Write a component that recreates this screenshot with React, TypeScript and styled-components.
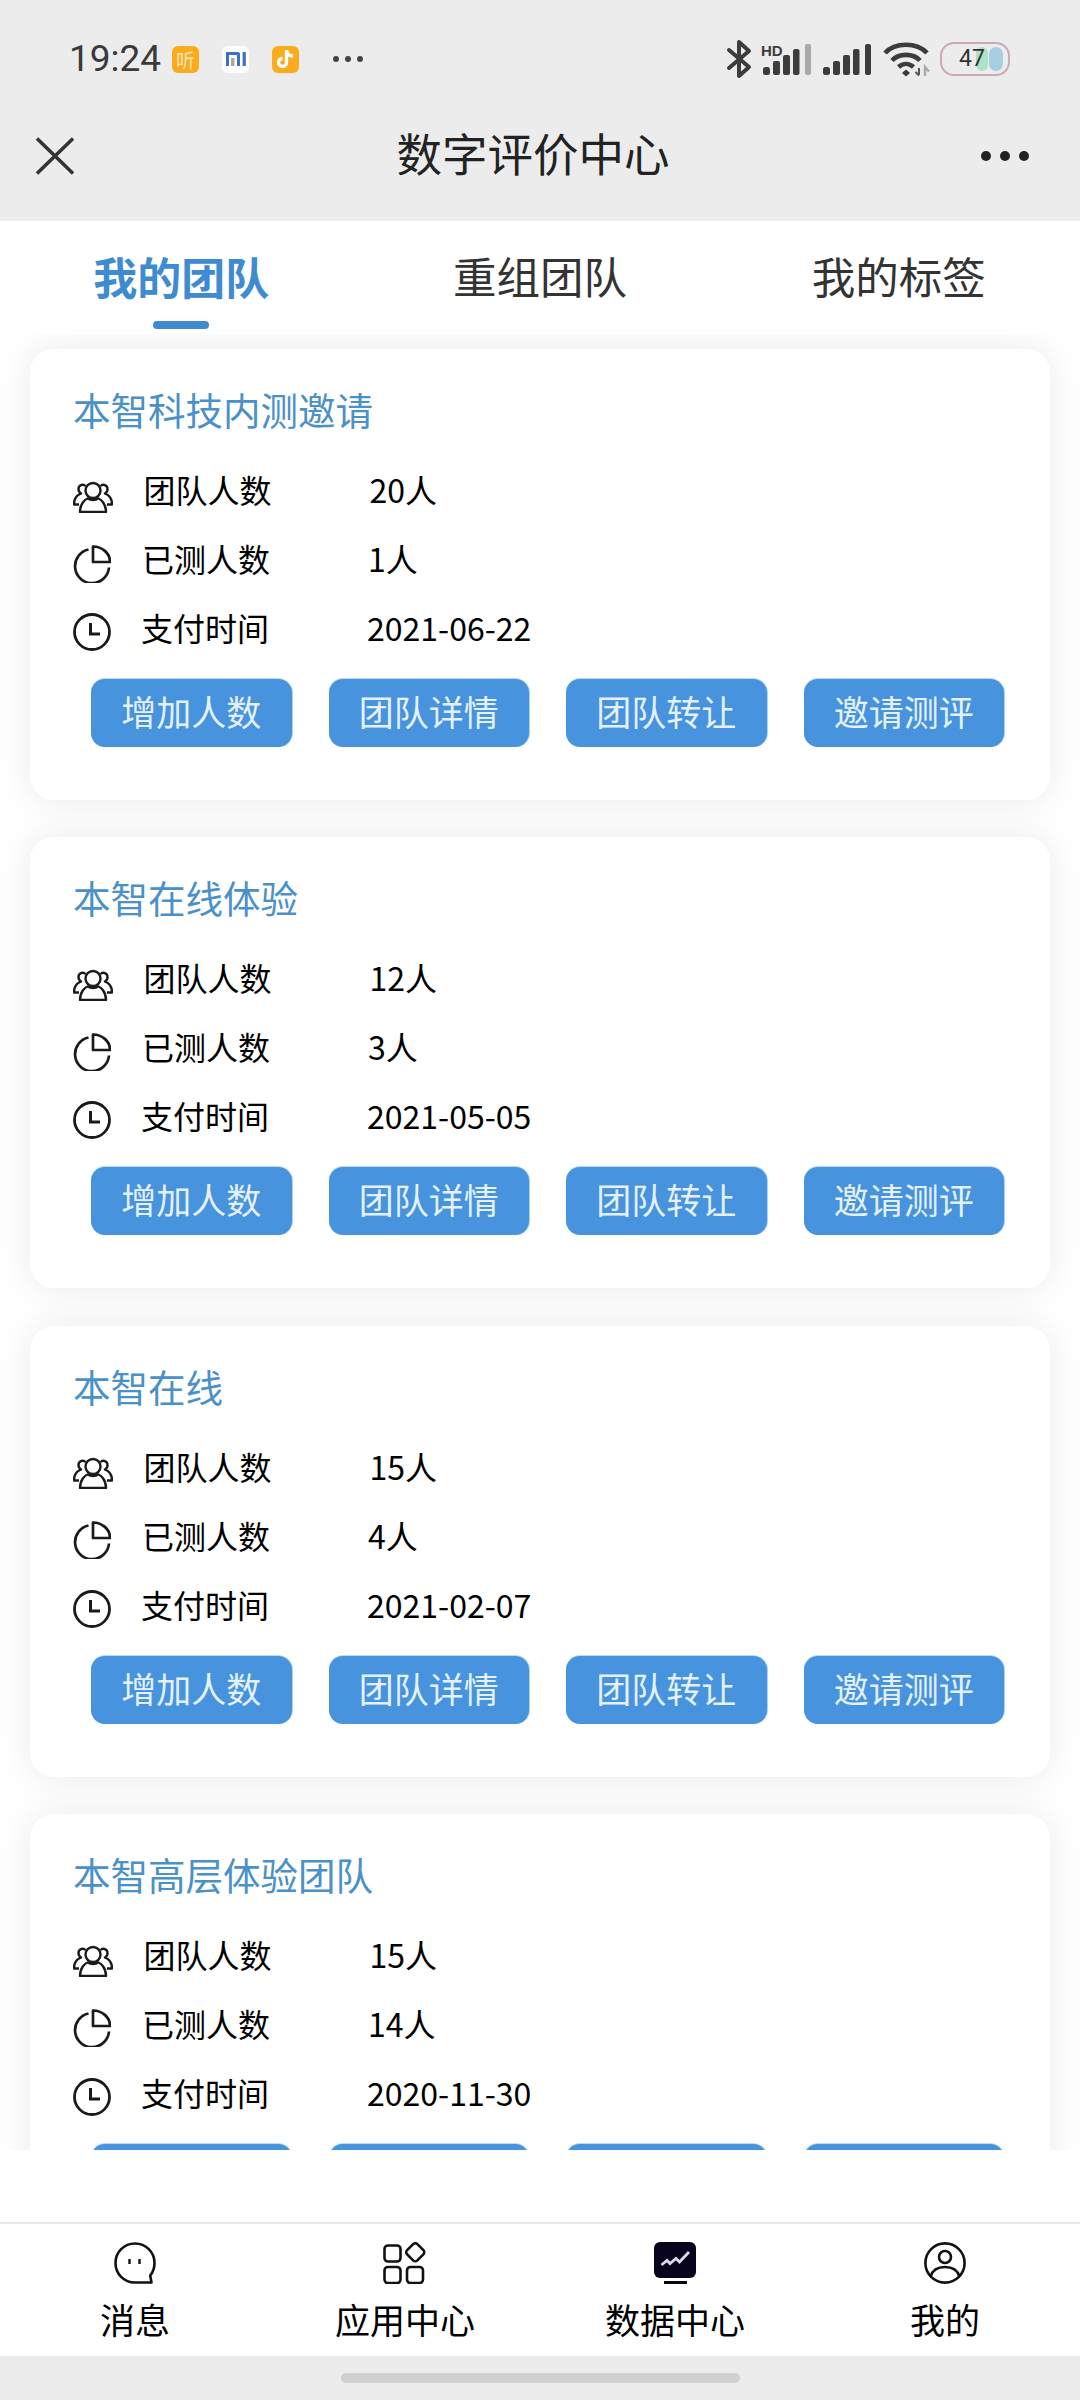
import React from "react";
import styled, { createGlobalStyle } from "styled-components";

const Global = createGlobalStyle`
  html, body { margin: 0; padding: 0; background: #fff; }
  * { box-sizing: border-box; }
`;

const CJK = `"Noto Sans CJK SC", "Noto Sans", sans-serif`;

const Page = styled.div`
  width: 1080px;
  height: 2400px;
  display: flex;
  flex-direction: column;
  overflow: hidden;
  background: #fff;
  font-family: ${CJK};
`;

const Header = styled.header`
  background: #ececec;
  height: 221px;
  flex: none;
  display: flex;
  flex-direction: column;
`;

const StatusBar = styled.div`
  height: 118px;
  display: flex;
  align-items: center;
  justify-content: space-between;
  padding: 0 70px 0 69px;
`;

const StatusLeft = styled.div`
  display: flex;
  align-items: center;
`;

const StatusRight = styled.div`
  display: flex;
  align-items: center;
`;

const Clock = styled.span`
  font-family: Roboto, sans-serif;
  font-size: 37px;
  line-height: 44px;
  color: #3a3a3a;
  width: 103px;
`;

const AppBadge = styled.span<{ $bg: string; $gap: number }>`
  width: 27px;
  height: 27px;
  border-radius: 6px;
  background: ${(p) => p.$bg};
  margin-right: ${(p) => p.$gap}px;
  display: flex;
  align-items: center;
  justify-content: center;
  color: #ffe6bb;
  font-size: 19px;
  line-height: 27px;
  font-family: ${CJK};
`;

const StatusDots = styled.span`
  display: flex;
  gap: 6px;
  margin-left: 11px;
`;

const StatusDot = styled.i`
  width: 6px;
  height: 6px;
  border-radius: 50%;
  background: #444;
`;

const SignalGroup = styled.span`
  position: relative;
  display: flex;
  margin-left: 11px;
`;

const HdTag = styled.span`
  position: absolute;
  left: -2px;
  top: 1px;
  font-family: "Liberation Sans", sans-serif;
  font-weight: 700;
  font-size: 15px;
  line-height: 14px;
  color: #3c3c3c;
`;

const Battery = styled.span`
  position: relative;
  width: 70px;
  height: 34px;
  margin-left: 10px;
  border: 2px solid #cba9bb;
  border-radius: 14px;
  display: flex;
  align-items: center;
  padding-left: 17px;
`;

const BatteryCell = styled.i<{ $left: number; $color: string; $w: number }>`
  position: absolute;
  top: 3px;
  bottom: 3px;
  left: ${(p) => p.$left}px;
  width: ${(p) => p.$w}px;
  border-radius: 7px;
  background: ${(p) => p.$color};
`;

const BatteryText = styled.span`
  position: relative;
  font-family: Roboto, sans-serif;
  font-size: 23px;
  line-height: 28px;
  color: #333;
`;

const NavBar = styled.div`
  height: 76px;
  display: grid;
  grid-template-columns: 1fr auto 1fr;
  align-items: center;
  padding: 0 51px 0 36px;
`;

const NavTitle = styled.h1`
  margin: 0;
  padding: 0 0 8px 1px;
  font-size: 45.5px;
  line-height: 60px;
  font-weight: 400;
  color: #222;
`;

const MoreDots = styled.div`
  justify-self: end;
  display: flex;
  gap: 9px;
`;

const MoreDot = styled.i`
  width: 10px;
  height: 10px;
  border-radius: 50%;
  background: #222;
`;

const Tabs = styled.nav`
  height: 113px;
  flex: none;
  display: flex;
  padding: 0 2px;
  background: #fff;
  position: relative;
  z-index: 2;
`;

const Tab = styled.div<{ $active?: boolean }>`
  flex: 1;
  display: flex;
  flex-direction: column;
  align-items: center;
  padding-top: 25px;
  font-size: ${(p) => (p.$active ? 44 : 43.5)}px;
  line-height: 60px;
  font-weight: ${(p) => (p.$active ? 700 : 400)};
  color: ${(p) => (p.$active ? "#3f8bd2" : "#333")};
`;

const TabMark = styled.i<{ $active?: boolean }>`
  width: 56px;
  height: 8px;
  margin-top: 15px;
  border-radius: 4px;
  background: ${(p) => (p.$active ? "#3f8bd2" : "transparent")};
`;

const List = styled.main`
  height: 1816px;
  flex: none;
  overflow: hidden;
  padding: 15px 30px 0;
  display: flex;
  flex-direction: column;
  gap: 37.25px;
`;

const Card = styled.section`
  flex: none;
  height: 451px;
  background: #fff;
  border-radius: 24px;
  padding: 37px 0 0 0;
  box-shadow: 0 0 36px rgba(0, 0, 0, 0.09);
`;

const CardTitle = styled.h2`
  margin: 0 0 25px;
  padding-left: 43px;
  font-size: 37.5px;
  line-height: 46px;
  font-weight: 400;
  color: #4a90c9;
`;

const Row = styled.div`
  height: 69px;
  display: flex;
  align-items: center;
  padding-left: 43px;
  font-size: 32px;
  color: #000;
`;

const RowIcon = styled.span<{ $slot: number; $drop: number }>`
  width: ${(p) => p.$slot}px;
  flex: none;
  display: flex;
  margin-top: ${(p) => p.$drop}px;
`;

const RowLabel = styled.span`
  width: 226px;
  flex: none;
  line-height: 44px;
  padding-bottom: 5px;
`;

const RowValue = styled.span`
  line-height: 44px;
  padding-bottom: 5px;
`;

const Actions = styled.div`
  margin-top: 15px;
  display: flex;
  gap: 37px;
  padding-left: 61px;
`;

const ActionButton = styled.button`
  width: 200.5px;
  height: 68px;
  padding: 0 0 4px;
  border: none;
  border-radius: 14px;
  background: #4793dd;
  box-shadow: 1px 0 0 #a9d2f3, 0 -1px 0 #b9dcf6;
  color: #e4f1fb;
  font-family: ${CJK};
  font-size: 35px;
  line-height: 64px;
  overflow: hidden;
`;

const Spacer = styled.div`
  height: 72px;
  flex: none;
`;

const BottomNav = styled.footer`
  height: 134px;
  flex: none;
  border-top: 2px solid #e8e8e8;
  display: grid;
  grid-template-columns: repeat(4, 270px);
  position: relative;
  z-index: 2;
  background: #fff;
`;

const NavItem = styled.div`
  display: flex;
  flex-direction: column;
  align-items: center;
  padding-top: 18px;
  font-size: 35px;
  line-height: 48px;
  color: #000;
`;

const NavIcon = styled.span`
  height: 42px;
  margin-bottom: 11px;
  display: flex;
`;

const HomeArea = styled.div`
  flex: 1;
  background: #ececec;
  display: flex;
  justify-content: center;
  padding-top: 17px;
`;

const HomePill = styled.i`
  width: 399px;
  height: 10px;
  border-radius: 5px;
  background: #d0d0d0;
`;

const IconX = () => (
  <svg width="38" height="38" viewBox="0 0 38 38" fill="none" stroke="#333" strokeWidth="3.4">
    <path d="M1 1.5 37 36.5M37 1.5 1 36.5" />
  </svg>
);

const IconBluetooth = () => (
  <svg width="26" height="40" viewBox="0 0 26 40" fill="none" stroke="#3c3c3c" strokeWidth="4" strokeLinejoin="round" strokeLinecap="round">
    <path d="M3 11 23 28 13 37V3L23 12 3 29" />
  </svg>
);

const Bars = ({ last }: { last: string }) => (
  <svg width="49" height="32" viewBox="0 0 49 32">
    <rect x="0" y="24" width="7" height="8" rx="2.5" fill="#3c3c3c" />
    <rect x="10" y="18" width="7" height="14" rx="2" fill="#3c3c3c" />
    <rect x="20" y="12" width="7" height="20" rx="2" fill="#3c3c3c" />
    <rect x="30" y="6" width="6.5" height="26" rx="2" fill="#3c3c3c" />
    <rect x="42" y="1" width="6" height="31" rx="2" fill={last} />
  </svg>
);

const IconWifi = () => (
  <svg width="47" height="36" viewBox="0 0 47 36" fill="none" stroke="#3c3c3c" strokeWidth="4.6">
    <path d="M2 12C12 1 34 1 44 12" />
    <path d="M9 19.5C16 12 30 12 37 19.5" />
    <path d="M15.5 26C20 22 26 22 30.5 26" />
    <path d="M23 28.5 27 32 23 35.5 19 32Z" fill="#3c3c3c" stroke="none" />
    <path d="M36 27v7M32.5 31l3.5 3.5" stroke="#555" strokeWidth="2" />
    <path d="M42 35v-9l4 4.5" stroke="#aaa" strokeWidth="2.4" />
  </svg>
);

const IconMi = () => (
  <svg width="20" height="14" viewBox="0 0 20 14">
    <path d="M0 0H12Q14 0 14 2V14H11V3H3V14H0Z" fill="#3d6fc8" />
    <rect x="5" y="6" width="3.4" height="8" fill="#a6a6a6" />
    <rect x="16.6" y="0" width="3.2" height="14" fill="#3d6fc8" />
  </svg>
);

const IconNote = () => (
  <svg width="18" height="20" viewBox="0 0 18 20" fill="none" stroke="#fff" strokeWidth="3.4">
    <path d="M9.5 1V13.5A4 4 0 1 1 5.5 9.5" />
    <path d="M9.5 2C10 5 12.5 7 16 7" />
  </svg>
);

const IconUsers = () => (
  <svg width="40" height="32" viewBox="0 0 40 32" fill="none" stroke="#1a1a1a" strokeWidth="2.4" strokeLinejoin="round">
    <circle cx="20" cy="9.5" r="7.5" />
    <path d="M7 31C7 22.5 12 18.5 14.5 17.5C18 19.5 22 19.5 25.5 17.5C28 18.5 33 22.5 33 31Z" />
    <path d="M12.5 5C10 2.5 5.5 4 5.5 8C5.5 10 6.5 11.5 8 12.5C4 14 1 18 1 23.5H6" />
    <path d="M27.5 5C30 2.5 34.5 4 34.5 8C34.5 10 33.5 11.5 32 12.5C36 14 39 18 39 23.5H34" />
  </svg>
);

const IconPie = () => (
  <svg width="38" height="38" viewBox="0 0 38 38" fill="none" stroke="#1a1a1a" strokeWidth="2.7" strokeLinejoin="round">
    <path d="M15.5 4.5A17 17 0 1 0 36 22.5" />
    <path d="M20 1.5C29 1.5 37 8 37 17H20Z" />
  </svg>
);

const IconClock = () => (
  <svg width="38" height="38" viewBox="0 0 38 38" fill="none" stroke="#1a1a1a" strokeWidth="2.8">
    <circle cx="19" cy="19" r="17.5" />
    <path d="M17.5 10V21H27" strokeWidth="3" />
  </svg>
);

const IconChat = () => (
  <svg width="42" height="42" viewBox="0 0 42 42" fill="none" stroke="#111" strokeWidth="2.6" strokeLinejoin="round">
    <path d="M21 1.5C31.8 1.5 40.5 10 40.5 21C40.5 26 38.8 30.5 36.2 33.5L37.5 40.5H21C10 40.5 1.5 32 1.5 21C1.5 10 10 1.5 21 1.5Z" />
    <path d="M15.5 17V22M25.5 17V22" strokeWidth="2.4" />
  </svg>
);

const IconApps = () => (
  <svg width="44" height="42" viewBox="0 0 44 42" fill="none" stroke="#111" strokeWidth="2.6">
    <rect x="1.5" y="3.5" width="16" height="16" rx="3.5" />
    <rect x="1.5" y="25" width="16" height="16" rx="3.5" />
    <rect x="24" y="25" width="16" height="16" rx="3.5" />
    <rect x="25" y="3" width="14.5" height="14.5" rx="3" transform="rotate(45 32.25 10.25)" />
  </svg>
);

const IconData = () => (
  <svg width="42" height="42" viewBox="0 0 42 42">
    <rect x="0" y="0" width="42" height="36" rx="6" fill="#08031f" />
    <rect x="10" y="39" width="23" height="3.4" fill="#08031f" />
    <path d="M7.5 23L13 18.5 16 21.5 22 16.5 25.5 20 35 10" fill="none" stroke="#ded9ee" strokeWidth="2.8" />
  </svg>
);

const IconUser = () => (
  <svg width="42" height="42" viewBox="0 0 42 42" fill="none" stroke="#111" strokeWidth="2.6">
    <circle cx="21" cy="21" r="19.6" />
    <circle cx="21" cy="15" r="6" />
    <path d="M6.5 34.5C8.5 28 14 25 21 25C28 25 33.5 28 35.5 34.5" />
  </svg>
);

const teams = [
  { title: "本智科技内测邀请", count: "20人", tested: "1人", paid: "2021-06-22" },
  { title: "本智在线体验", count: "12人", tested: "3人", paid: "2021-05-05" },
  { title: "本智在线", count: "15人", tested: "4人", paid: "2021-02-07" },
  { title: "本智高层体验团队", count: "15人", tested: "14人", paid: "2020-11-30" },
];

const actions = ["增加人数", "团队详情", "团队转让", "邀请测评"];

const navItems = [
  { label: "消息", icon: <IconChat /> },
  { label: "应用中心", icon: <IconApps /> },
  { label: "数据中心", icon: <IconData /> },
  { label: "我的", icon: <IconUser /> },
];

export default function App() {
  return (
    <Page>
      <Global />
      <Header>
        <StatusBar>
          <StatusLeft>
            <Clock>19:24</Clock>
            <AppBadge $bg="#fbab1e" $gap={23}>听</AppBadge>
            <AppBadge $bg="#ffffff" $gap={23}><IconMi /></AppBadge>
            <AppBadge $bg="#fbab1e" $gap={23}><IconNote /></AppBadge>
            <StatusDots><StatusDot /><StatusDot /><StatusDot /></StatusDots>
          </StatusLeft>
          <StatusRight>
            <IconBluetooth />
            <SignalGroup>
              <HdTag>HD</HdTag>
              <Bars last="#aaaaaa" />
            </SignalGroup>
            <SignalGroup><Bars last="#3c3c3c" /></SignalGroup>
            <SignalGroup><IconWifi /></SignalGroup>
            <Battery>
              <BatteryCell $left={34} $w={12} $color="#aee2c6" />
              <BatteryCell $left={47} $w={14} $color="#a8cee4" />
              <BatteryText>47</BatteryText>
            </Battery>
          </StatusRight>
        </StatusBar>
        <NavBar>
          <IconX />
          <NavTitle>数字评价中心</NavTitle>
          <MoreDots><MoreDot /><MoreDot /><MoreDot /></MoreDots>
        </NavBar>
      </Header>
      <Tabs>
        {["我的团队", "重组团队", "我的标签"].map((t, i) => (
          <Tab key={t} $active={i === 0}>
            {t}
            <TabMark $active={i === 0} />
          </Tab>
        ))}
      </Tabs>
      <List>
        {teams.map((team) => (
          <Card key={team.title}>
            <CardTitle>{team.title}</CardTitle>
            <Row>
              <RowIcon $slot={70.5} $drop={10}><IconUsers /></RowIcon>
              <RowLabel>团队人数</RowLabel>
              <RowValue>{team.count}</RowValue>
            </Row>
            <Row>
              <RowIcon $slot={69} $drop={6}><IconPie /></RowIcon>
              <RowLabel>已测人数</RowLabel>
              <RowValue>{team.tested}</RowValue>
            </Row>
            <Row>
              <RowIcon $slot={68} $drop={5}><IconClock /></RowIcon>
              <RowLabel>支付时间</RowLabel>
              <RowValue>{team.paid}</RowValue>
            </Row>
            <Actions>
              {actions.map((a) => (
                <ActionButton key={a}>{a}</ActionButton>
              ))}
            </Actions>
          </Card>
        ))}
      </List>
      <Spacer />
      <BottomNav>
        {navItems.map((n) => (
          <NavItem key={n.label}>
            <NavIcon>{n.icon}</NavIcon>
            {n.label}
          </NavItem>
        ))}
      </BottomNav>
      <HomeArea><HomePill /></HomeArea>
    </Page>
  );
}
